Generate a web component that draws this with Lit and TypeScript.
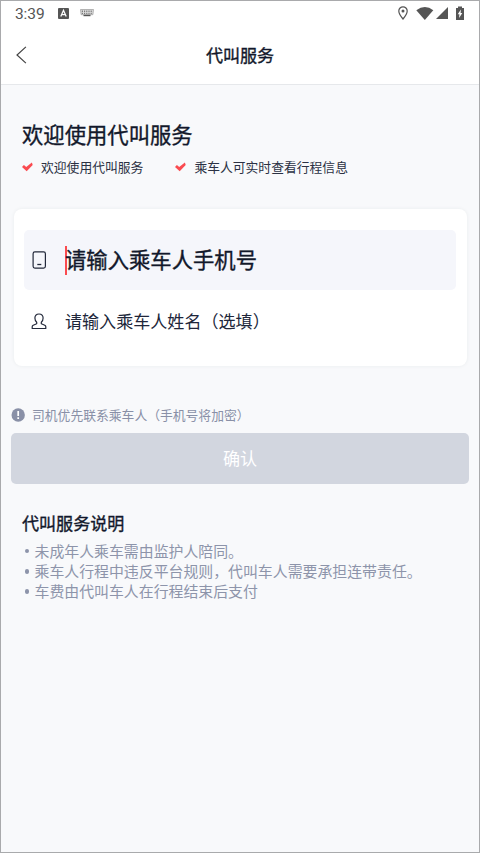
import { LitElement, html, css, svg } from "lit";
import { customElement } from "lit/decorators.js";

const check = html`<svg class="check" width="12" height="10" viewBox="0 0 12 10">
  <path d="M0 5 1.900 3.100 4.200 5 9.900.5 10.700 3 4.700 9.300z" fill="#fa4b50" />
</svg>`;

const keys = [0, 1, 2, 3, 4].map(
  (i) => svg`<path d="M${2.4 + i * 2.2} 1.6v1.3M${2.4 + i * 2.2} 3.8v1.3" />`
);

@customElement("app-root")
export class AppRoot extends LitElement {
  static styles = css`
    :host {
      display: block;
      height: 853px;
      font-family: "Noto Sans CJK SC", "Noto Sans", sans-serif;
      color: #12182b;
    }
    .screen {
      box-sizing: border-box;
      height: 100%;
      border: 1px solid #a9aaac;
      background: #f8f9fb;
      overflow: hidden;
      display: flex;
      flex-direction: column;
    }
    svg { display: block; flex: none; }
    .status {
      height: 24px;
      background: #fff;
      display: flex;
      align-items: center;
      padding: 0 15px 0 14px;
      color: #555;
      flex: none;
    }
    .time {
      font: 15.5px/24px Roboto, sans-serif;
      width: 43px;
      letter-spacing: -0.1px;
      padding-top: 1px;
    }
    .keyboard { margin-left: 11px; }
    .space { flex: 1; }
    .wifi { margin-left: 8px; }
    .signal { margin-left: 2px; }
    .battery { margin-left: 8px; }
    .nav {
      height: 60px;
      flex: none;
      box-sizing: border-box;
      border-bottom: 1px solid #e6e8eb;
      background: #fff;
      display: grid;
      grid-template-columns: 60px 1fr 60px;
      align-items: center;
      padding-top: 1px;
    }
    .back { margin-left: 14px; }
    .title {
      font-size: 17.07px;
      line-height: 24px;
      text-align: center;
    }
    .strong { -webkit-text-stroke: 0.35px currentColor; font-weight: 400; margin: 0; }
    .intro { padding: 34px 21px 0; }
    .heading { font-size: 21.33px; line-height: 30px; }
    .points {
      display: flex;
      gap: 32px;
      margin-top: 8px;
      font-size: 12.8px;
      line-height: 20px;
      color: #2b3143;
    }
    .point { display: flex; align-items: center; }
    .check { margin-right: 7px; }
    .card {
      box-sizing: border-box;
      height: 157px;
      margin: 32px 12px 0 13px;
      padding: 21px 11px 0 10px;
      border-radius: 8px;
      background: #fff;
      box-shadow: 0 0 3px 1px #eff1f3;
      flex: none;
    }
    .field { display: flex; align-items: center; padding-left: 8px; }
    .phone {
      height: 60px;
      border-radius: 5px;
      background: #f5f6fb;
      font-size: 21.33px;
    }
    .field svg { margin-right: 18px; }
    .caret { width: 2px; height: 29px; background: #fa4b50; margin-right: -2px; }
    .label { padding-bottom: 2px; }
    .phone .label { padding-bottom: 4px; }
    .name { height: 62px; font-size: 17.07px; padding-left: 7px; color: #20263a; }
    .hint {
      display: flex;
      align-items: center;
      gap: 7px;
      margin: 39px 0 0 10px;
      height: 20px;
      font-size: 12.8px;
      color: #8990a7;
    }
    .hint .label { padding-bottom: 1px; }
    .confirm {
      height: 51px;
      margin: 8px 10px 0;
      border: 0;
      padding: 0 0 2px;
      border-radius: 5px;
      background: #d2d6df;
      color: #fff;
      font: inherit;
      font-size: 17.07px;
      flex: none;
    }
    .notes { padding: 27px 21px 0; }
    .notes-title { font-size: 17.07px; line-height: 24px; }
    .list {
      list-style: none;
      margin: 6px 0 0;
      padding: 0;
      font-size: 14.9px;
      line-height: 20.2px;
      color: #8d94aa;
    }
    .item { display: flex; align-items: center; white-space: nowrap; }
    .item::before {
      content: "";
      width: 4.5px;
      height: 4.5px;
      border-radius: 50%;
      background: currentColor;
      margin: 0 5.5px 0 2.5px;
    }
  `;

  render() {
    return html`<div class="screen">
      <div class="status">
        <span class="time">3:39</span>
        <svg width="11" height="11" viewBox="0 0 11 11">
          <rect width="11" height="11" rx="1" fill="#555" />
          <path d="M2.8 8.6 5.5 2.3 8.2 8.6M3.8 6.7h3.4" fill="none" stroke="#fff" stroke-width="1.3" />
        </svg>
        <svg class="keyboard" width="14" height="8" viewBox="0 0 14 8">
          <path d="M.5.5h13l-.6 5.2H1.1z" fill="#ddd" stroke="#999" stroke-width=".7" />
          <g stroke="#777" stroke-width="1.1">${keys}</g>
          <path d="M3.5 6.5h7" stroke="#555" stroke-width="1.4" />
        </svg>
        <span class="space"></span>
        <svg width="10" height="14" viewBox="0 0 10 14">
          <path d="M5 .8A4.2 4.2 0 0 0 .8 5C.8 8 5 13 5 13S9.2 8 9.2 5A4.2 4.2 0 0 0 5 .8z" fill="none" stroke="#555" stroke-width="1.2" />
          <circle cx="5" cy="4.9" r="1.5" fill="#555" />
        </svg>
        <svg class="wifi" width="18" height="13" viewBox="0 0 18 13">
          <path d="M.3 3.2Q9-3 17.3 3.2L8.8 13z" fill="#555" />
        </svg>
        <svg class="signal" width="12" height="12" viewBox="0 0 12 12">
          <path d="M12 0v12H0z" fill="#555" />
        </svg>
        <svg class="battery" width="8" height="14" viewBox="0 0 8 14">
          <path d="M0 2h2V.5h4V2h2v12H0z" fill="#555" />
          <path d="M4.9 3.5 1.7 8.3h1.7L3.1 12l3.2-5H4.6z" fill="#fff" />
        </svg>
      </div>
      <header class="nav">
        <svg class="back" width="12" height="18" viewBox="0 0 12 18">
          <path d="M10.9.9 2 9l8.9 8.1" fill="none" stroke="#444" stroke-width="1.2" />
        </svg>
        <h1 class="title strong">代叫服务</h1>
      </header>
      <section class="intro">
        <h2 class="heading strong">欢迎使用代叫服务</h2>
        <div class="points">
          <span class="point">${check}欢迎使用代叫服务</span>
          <span class="point">${check}乘车人可实时查看行程信息</span>
        </div>
      </section>
      <section class="card">
        <div class="field phone">
          <svg width="15" height="18" viewBox="0 0 15 18">
            <rect x="1.1" y=".9" width="12.3" height="16.2" rx="1.8" fill="none" stroke="#22283a" stroke-width="1.2" />
            <path d="M5.3 13.5h4" stroke="#22283a" stroke-width="1.3" />
          </svg>
          <span class="caret"></span>
          <span class="label strong">请输入乘车人手机号</span>
        </div>
        <div class="field name">
          <svg width="16" height="17" viewBox="0 0 16 17">
            <path d="M5.7 9.3C4.3 8.2 3.9 6.8 3.9 5.1 3.9 2.6 5.500 1 8 1s4.100 1.600 4.100 4.100c0 1.700-.4 3.100-1.800 4.200v1.400l3.500 1.500q1 .5 1 1.600v1.700H1.200v-1.700q0-1.100 1-1.600l3.500-1.500z" fill="none" stroke="#22283a" stroke-width="1.2" stroke-linejoin="round" />
          </svg>
          <span class="label">请输入乘车人姓名（选填）</span>
        </div>
      </section>
      <div class="hint">
        <svg width="14" height="14" viewBox="0 0 14 14">
          <circle cx="7.2" cy="7" r="6.7" fill="#8990a7" />
          <path d="M7.2 2.9v5.2M7.2 9.3v1.7" stroke="#fff" stroke-width="1.7" />
        </svg>
        <span class="label">司机优先联系乘车人（手机号将加密）</span>
      </div>
      <button class="confirm">确认</button>
      <section class="notes">
        <h3 class="notes-title strong">代叫服务说明</h3>
        <ul class="list">
          <li class="item">未成年人乘车需由监护人陪同。</li>
          <li class="item">乘车人行程中违反平台规则，代叫车人需要承担连带责任。</li>
          <li class="item">车费由代叫车人在行程结束后支付</li>
        </ul>
      </section>
    </div>`;
  }
}
